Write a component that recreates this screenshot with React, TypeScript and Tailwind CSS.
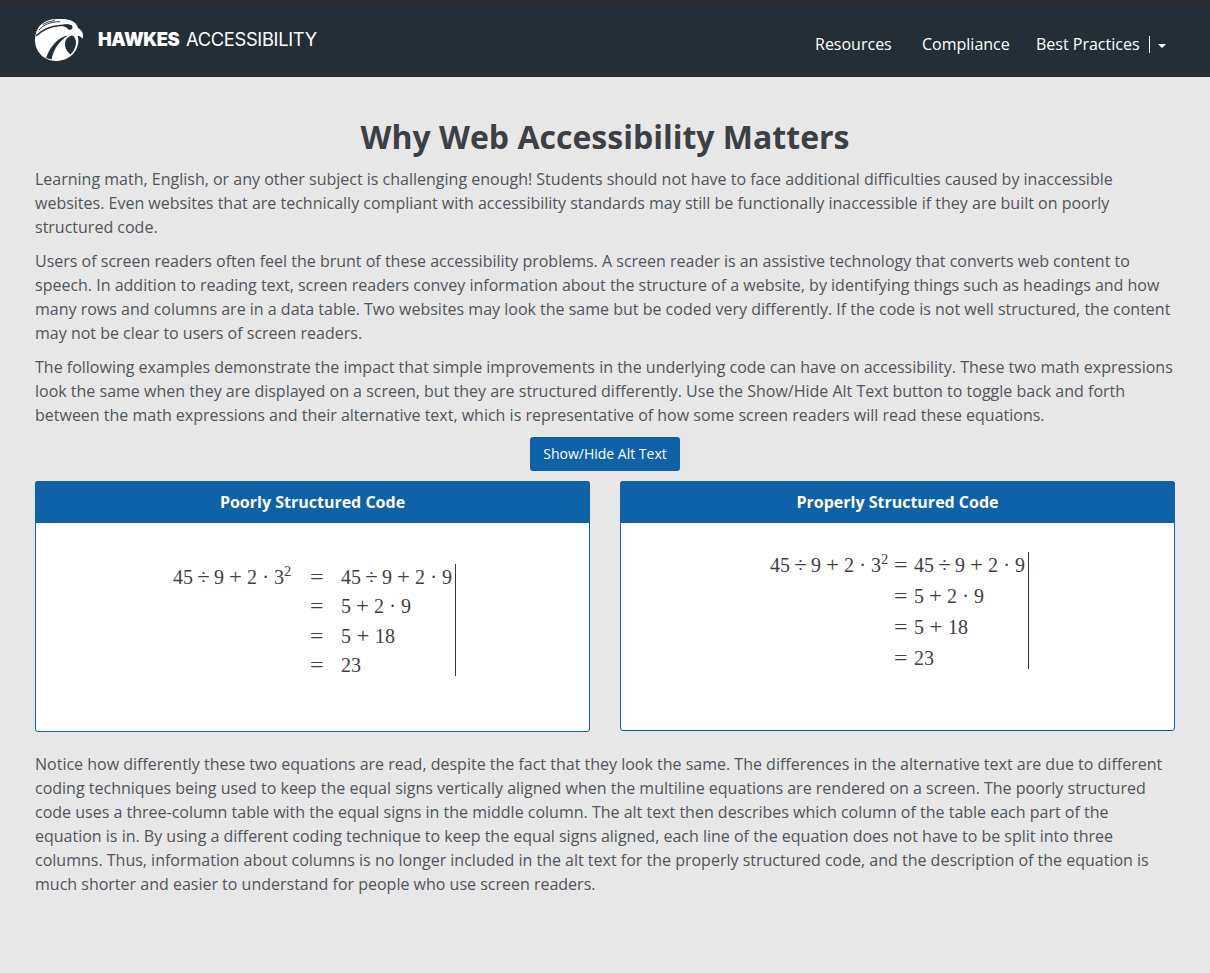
import React from "react";

const paragraph = "text-[16px] leading-[24px] mb-[10px] whitespace-nowrap";

function Lines({ lines }: { lines: string[] }) {
  return (
    <p className={paragraph}>
      {lines.map((line) => (
        <span key={line} className="block">
          {line}
        </span>
      ))}
    </p>
  );
}

function Logo() {
  return (
    <svg className="mt-[15px] h-[44px] w-[48px] shrink-0" viewBox="0 0 48 44" aria-hidden="true">
      <path
        fill="#fff"
        d="M16 2.500C20 1.700 26 1.800 31 2.200C37 3 42 6 43 11C45.500 12.500 48 15 48 18C48.200 20 47.500 22 47 21.500C46 19.500 44.500 19 42.500 19C44.500 24 43 31 38.500 36.500C34 41.500 27 44 20.500 44C9 43.500 0 35 0 23C0 12 6 5 16 2.500Z"
      />
      <path
        fill="none"
        stroke="#232e36"
        strokeWidth="1.5"
        strokeLinecap="round"
        d="M1.500 18.500C8 12.500 16 9.200 25 8.500C29 8.200 33 8.200 36 9"
      />
      <path fill="none" stroke="#232e36" strokeWidth="0.9" d="M4 13C9 7.500 15 5 25 4.600M8 7.500C12 5 16 4 20 3.600" />
      <path fill="#232e36" d="M28 7.800C31 7 36 7.200 37.300 9C38 11 37 13 34.500 12.700C32 12.200 33 10.200 28 9.200Z" />
      <path fill="#232e36" d="M33 18.600C24 20 16 28 11 41L16.500 42.500C18.500 33 23.500 24.500 33 18.600Z" />
      <path fill="#232e36" d="M38.500 19C43 24 41 32 35.500 37.500C32 35 29.800 31 30 26.500C30.200 23 32 20.500 35 19.200C36.200 18.700 37.500 18.600 38.500 19Z" />
    </svg>
  );
}

function Op({ children, wide }: { children: React.ReactNode; wide?: string }) {
  return (
    <span className={`inline-block text-center ${wide ? "scale-x-[1.14]" : ""} ${wide ?? "w-[17px]"}`}>{children}</span>
  );
}

function Start() {
  return (
    <>
      45<Op wide="w-[21px]">÷</Op>9<Op wide="w-[23px]">+</Op>2<Op>·</Op>
    </>
  );
}

function Power() {
  return (
    <span className="whitespace-nowrap">
      <Start />3<span className="relative -top-[8px] text-[14.500px] leading-none">2</span>
    </span>
  );
}

const results: React.ReactNode[] = [
  <>
    <Start />9
  </>,
  <>
    5<Op wide="w-[23px]">+</Op>2<Op>·</Op>9
  </>,
  <>
    5<Op wide="w-[24px]">+</Op>18
  </>,
  <>23</>,
];

const mathFont = "font-['Liberation_Serif',serif] text-[20px] text-[#404040] whitespace-nowrap";

export default function App() {
  return (
    <div className="min-h-[973px] bg-[#e7e7e7] font-['Open_Sans',sans-serif] text-[#50555a]">
      <header className="flex h-[77px] items-start border-t-[3px] border-[#2c2c2e] bg-[#232e36] pl-[35px] pr-[44px] text-white">
        <div className="-mt-px flex">
          <Logo />
          <div className="ml-[15px] mt-[24px] flex h-[26px] items-center font-['Inter',sans-serif] text-[18.300px] leading-[26px] whitespace-nowrap">
            <span className="w-[88px] font-black tracking-[-0.4px]">HAWKES</span>
            <span className="tracking-[-0.300px]">ACCESSIBILITY</span>
          </div>
        </div>
        <nav className="ml-auto mt-[29px] flex text-[16px] leading-[24px] whitespace-nowrap">
          <a className="w-[107px]">Resources</a>
          <a className="w-[114px]">Compliance</a>
          <a className="w-[111px]">Best Practices</a>
          <a className="flex w-[19px] items-center">
            <span className="ml-[2px] h-[17px] w-px shrink-0 bg-white" />
            <span className="ml-[8px] mt-[3px] h-0 w-0 shrink-0 border-x-4 border-t-4 border-x-transparent border-t-white" />
          </a>
        </nav>
      </header>
      <main className="px-[35px] pt-[38px]">
        <h1 className="mb-[8px] text-center text-[32px] leading-[44px] font-bold text-[#3c4044]">
          Why Web Accessibility Matters
        </h1>
        <Lines
          lines={[
            "Learning math, English, or any other subject is challenging enough! Students should not have to face additional difficulties caused by inaccessible",
            "websites. Even websites that are technically compliant with accessibility standards may still be functionally inaccessible if they are built on poorly",
            "structured code.",
          ]}
        />
        <Lines
          lines={[
            "Users of screen readers often feel the brunt of these accessibility problems. A screen reader is an assistive technology that converts web content to",
            "speech. In addition to reading text, screen readers convey information about the structure of a website, by identifying things such as headings and how",
            "many rows and columns are in a data table. Two websites may look the same but be coded very differently. If the code is not well structured, the content",
            "may not be clear to users of screen readers.",
          ]}
        />
        <Lines
          lines={[
            "The following examples demonstrate the impact that simple improvements in the underlying code can have on accessibility. These two math expressions",
            "look the same when they are displayed on a screen, but they are structured differently. Use the Show/Hide Alt Text button to toggle back and forth",
            "between the math expressions and their alternative text, which is representative of how some screen readers will read these equations.",
          ]}
        />
        <div className="flex justify-center">
          <button className="h-[34px] w-[150px] rounded-[3px] bg-[#1062a8] pb-[2px] text-[14px] whitespace-nowrap text-white">
            Show/Hide Alt Text
          </button>
        </div>
        <div className="mt-[10px] grid grid-cols-2 items-start gap-[30px]">
          <section className="h-[251px] rounded-[3px] border border-[#1062a8] bg-white">
            <h2 className="-mx-px -mt-px flex h-[42px] items-center justify-center rounded-t-[3px] bg-[#1062a8] text-[16px] font-bold text-white">
              Poorly Structured Code
            </h2>
            <div className={`${mathFont} ml-[137px] mt-[41px] w-[283px] border-r border-[#333] h-[112px]`}>
              {results.map((result, i) => (
                <div key={i} className="flex h-[29.300px] items-start leading-[26px]">
                  <span className="w-[137px]">{i === 0 && <Power />}</span>
                  <span className="w-[31px] origin-left scale-x-[1.2]">=</span>
                  <span>{result}</span>
                </div>
              ))}
            </div>
          </section>
          <section className="h-[250px] rounded-[3px] border border-[#1062a8] bg-white">
            <h2 className="-mx-px -mt-px flex h-[42px] items-center justify-center rounded-t-[3px] bg-[#1062a8] text-[16px] font-bold text-white">
              Properly Structured Code
            </h2>
            <div className={`${mathFont} ml-[149px] mt-[29px] w-[259px] border-r border-[#333] h-[117px]`}>
              {results.map((result, i) => (
                <div key={i} className="flex h-[31px] items-start leading-[26px]">
                  <span className="w-[124px]">{i === 0 && <Power />}</span>
                  <span className="w-[20px] origin-left scale-x-[1.2]">=</span>
                  <span>{result}</span>
                </div>
              ))}
            </div>
          </section>
        </div>
        <div className="mt-[20px]">
          <Lines
            lines={[
              "Notice how differently these two equations are read, despite the fact that they look the same. The differences in the alternative text are due to different",
              "coding techniques being used to keep the equal signs vertically aligned when the multiline equations are rendered on a screen. The poorly structured",
              "code uses a three-column table with the equal signs in the middle column. The alt text then describes which column of the table each part of the",
              "equation is in. By using a different coding technique to keep the equal signs aligned, each line of the equation does not have to be split into three",
              "columns. Thus, information about columns is no longer included in the alt text for the properly structured code, and the description of the equation is",
              "much shorter and easier to understand for people who use screen readers.",
            ]}
          />
        </div>
      </main>
    </div>
  );
}
